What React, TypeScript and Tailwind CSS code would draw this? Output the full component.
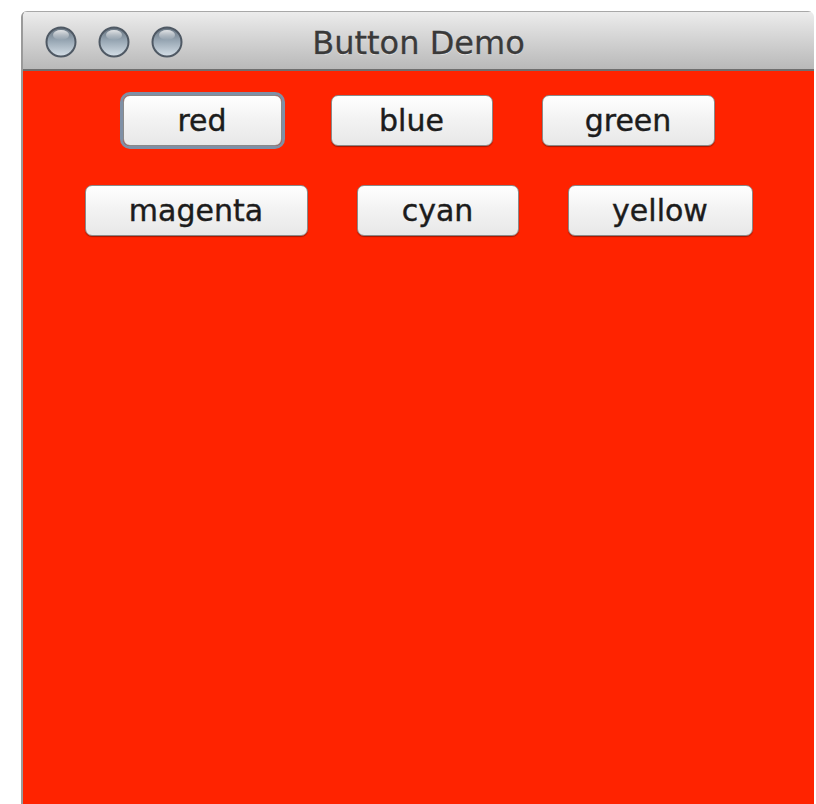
import React from 'react';

const rows = [
  [
    { label: 'red', width: 'w-[159px]', focused: true },
    { label: 'blue', width: 'w-[162px]' },
    { label: 'green', width: 'w-[173px]' },
  ],
  [
    { label: 'magenta', width: 'w-[223px]' },
    { label: 'cyan', width: 'w-[162px]' },
    { label: 'yellow', width: 'w-[185px]' },
  ],
];

const uiFont = { fontFamily: '"DejaVu Sans", "Liberation Sans", sans-serif' };

function WindowDot() {
  return (
    <svg width="32" height="32" viewBox="0 0 32 32">
      <defs>
        <linearGradient id="dotFill" x1="0" y1="0" x2="0" y2="1">
          <stop offset="0" stopColor="#66737f" />
          <stop offset="0.45" stopColor="#97a6b3" />
          <stop offset="1" stopColor="#d6e0e8" />
        </linearGradient>
        <linearGradient id="dotShine" x1="0" y1="0" x2="0" y2="1">
          <stop offset="0" stopColor="#ffffff" stopOpacity="0.8" />
          <stop offset="1" stopColor="#ffffff" stopOpacity="0" />
        </linearGradient>
      </defs>
      <circle cx="16" cy="16" r="14.5" fill="url(#dotFill)" stroke="#4f5964" strokeWidth="2" />
      <ellipse cx="16" cy="9" rx="8" ry="5" fill="url(#dotShine)" />
    </svg>
  );
}

function AquaButton({ label, width, focused }: { label: string; width: string; focused?: boolean }) {
  return (
    <button
      className={
        'h-[51px] rounded-[7px] border border-[#8a8a8a] bg-gradient-to-b from-[#ffffff] via-[#f2f2f2] to-[#e8e8e8] text-[30px] leading-none text-[#1c1c1c] shadow-[0_1px_1px_rgba(0,0,0,0.35)] [-webkit-text-stroke:0.4px_#1c1c1c] ' +
        width +
        (focused ? ' ring-[3px] ring-[#7f90a6] border-[#6d7d92]' : '')
      }
      style={uiFont}
    >
      {label}
    </button>
  );
}

export default function App() {
  return (
    <div className="h-[804px] w-[816px] overflow-hidden bg-white pl-[21px] pt-[11px]">
      <div className="flex h-[793px] w-[793px] flex-col overflow-hidden rounded-t-[6px] border-l-2 border-[#9a9a9a]">
        {/* title bar */}
        <div className="relative flex h-[60px] shrink-0 items-center border-b-2 border-t border-[#6f6f6f] border-t-[#a8a8a8] bg-gradient-to-b from-[#ececec] to-[#b9b9b9]">
          <div className="ml-[22px] flex gap-[21px] pt-[2px]">
            <WindowDot />
            <WindowDot />
            <WindowDot />
          </div>
          <div
            className="absolute inset-0 flex items-center justify-center pt-[4px] text-[32px] text-[#3a3a3a] [-webkit-text-stroke:0.3px_#3a3a3a] [text-shadow:0_1px_0_rgba(255,255,255,0.6)]"
            style={uiFont}
          >
            Button Demo
          </div>
        </div>

        {/* content */}
        <div className="flex flex-1 flex-col items-center gap-[37px] bg-[#ff2300] pt-[23px]">
          {rows.map((row, i) => (
            <div key={i} className="flex h-[53px] items-center gap-[49px]">
              {row.map((b) => (
                <AquaButton key={b.label} {...b} />
              ))}
            </div>
          ))}
        </div>
      </div>
    </div>
  );
}
